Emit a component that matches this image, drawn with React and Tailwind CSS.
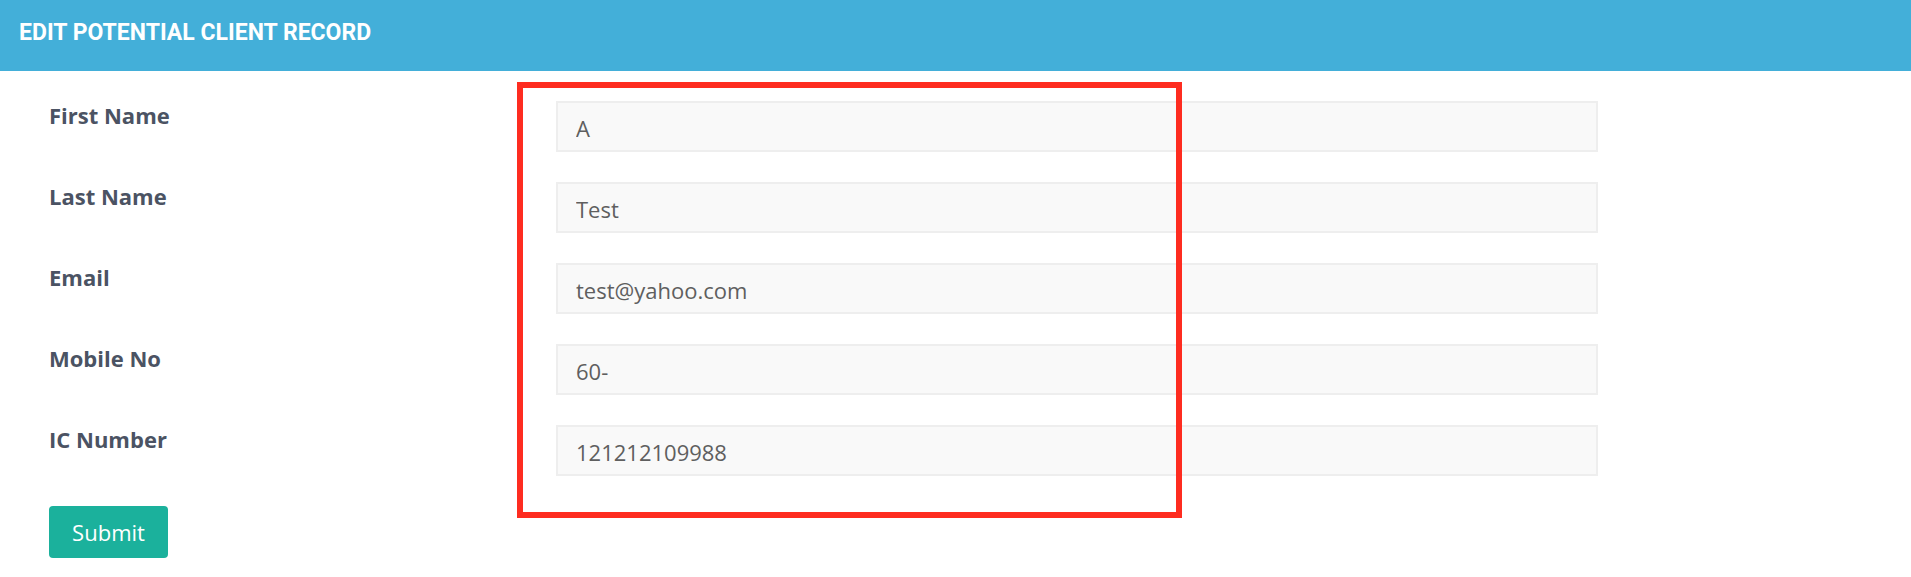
// App.jsx
const campos = [
  { label: "First Name", valor: "A" },
  { label: "Last Name", valor: "Test" },
  { label: "Email", valor: "test@yahoo.com" },
  { label: "Mobile No", valor: "60-" },
  { label: "IC Number", valor: "121212109988" },
];

export default function App() {
  return (
    <div className="relative min-h-screen bg-white font-['Open_Sans',sans-serif]">
      {/* Encabezado */}
      <div className="h-[71px] bg-[#43afd9] pl-[19px] pt-[21px]">
        <h1 className="font-['Roboto',sans-serif] text-[23px] font-bold leading-none text-white uppercase">
          Edit Potential Client Record
        </h1>
      </div>

      {/* Formulario */}
      <form className="pl-[49px] pt-[30px]" onSubmit={(e) => e.preventDefault()}>
        <div className="grid grid-cols-[507px_1042px] gap-y-[30px]">
          {campos.map((c) => (
            <Fila key={c.label} label={c.label} valor={c.valor} />
          ))}
        </div>
        <button
          type="submit"
          className="mt-[30px] h-[52px] w-[119px] rounded-[4px] bg-[#1bb19c] text-[22px] leading-none text-white"
        >
          Submit
        </button>
      </form>

      {/* Marca roja */}
      <div className="pointer-events-none absolute left-[517px] top-[82px] h-[436px] w-[665px] border-[6px] border-[#fe2c20]" />
    </div>
  );
}

function Fila({ label, valor }) {
  return (
    <>
      <label className="pt-[3px] text-[22px] font-bold leading-none text-[#4b5363]">
        {label}
      </label>
      <input
        type="text"
        defaultValue={valor}
        className="h-[51px] w-full border-2 border-[#eeeeee] bg-[#f9f9f9] px-[18px] pt-[3px] text-[22px] text-[#5f5f5f] outline-none"
      />
    </>
  );
}
